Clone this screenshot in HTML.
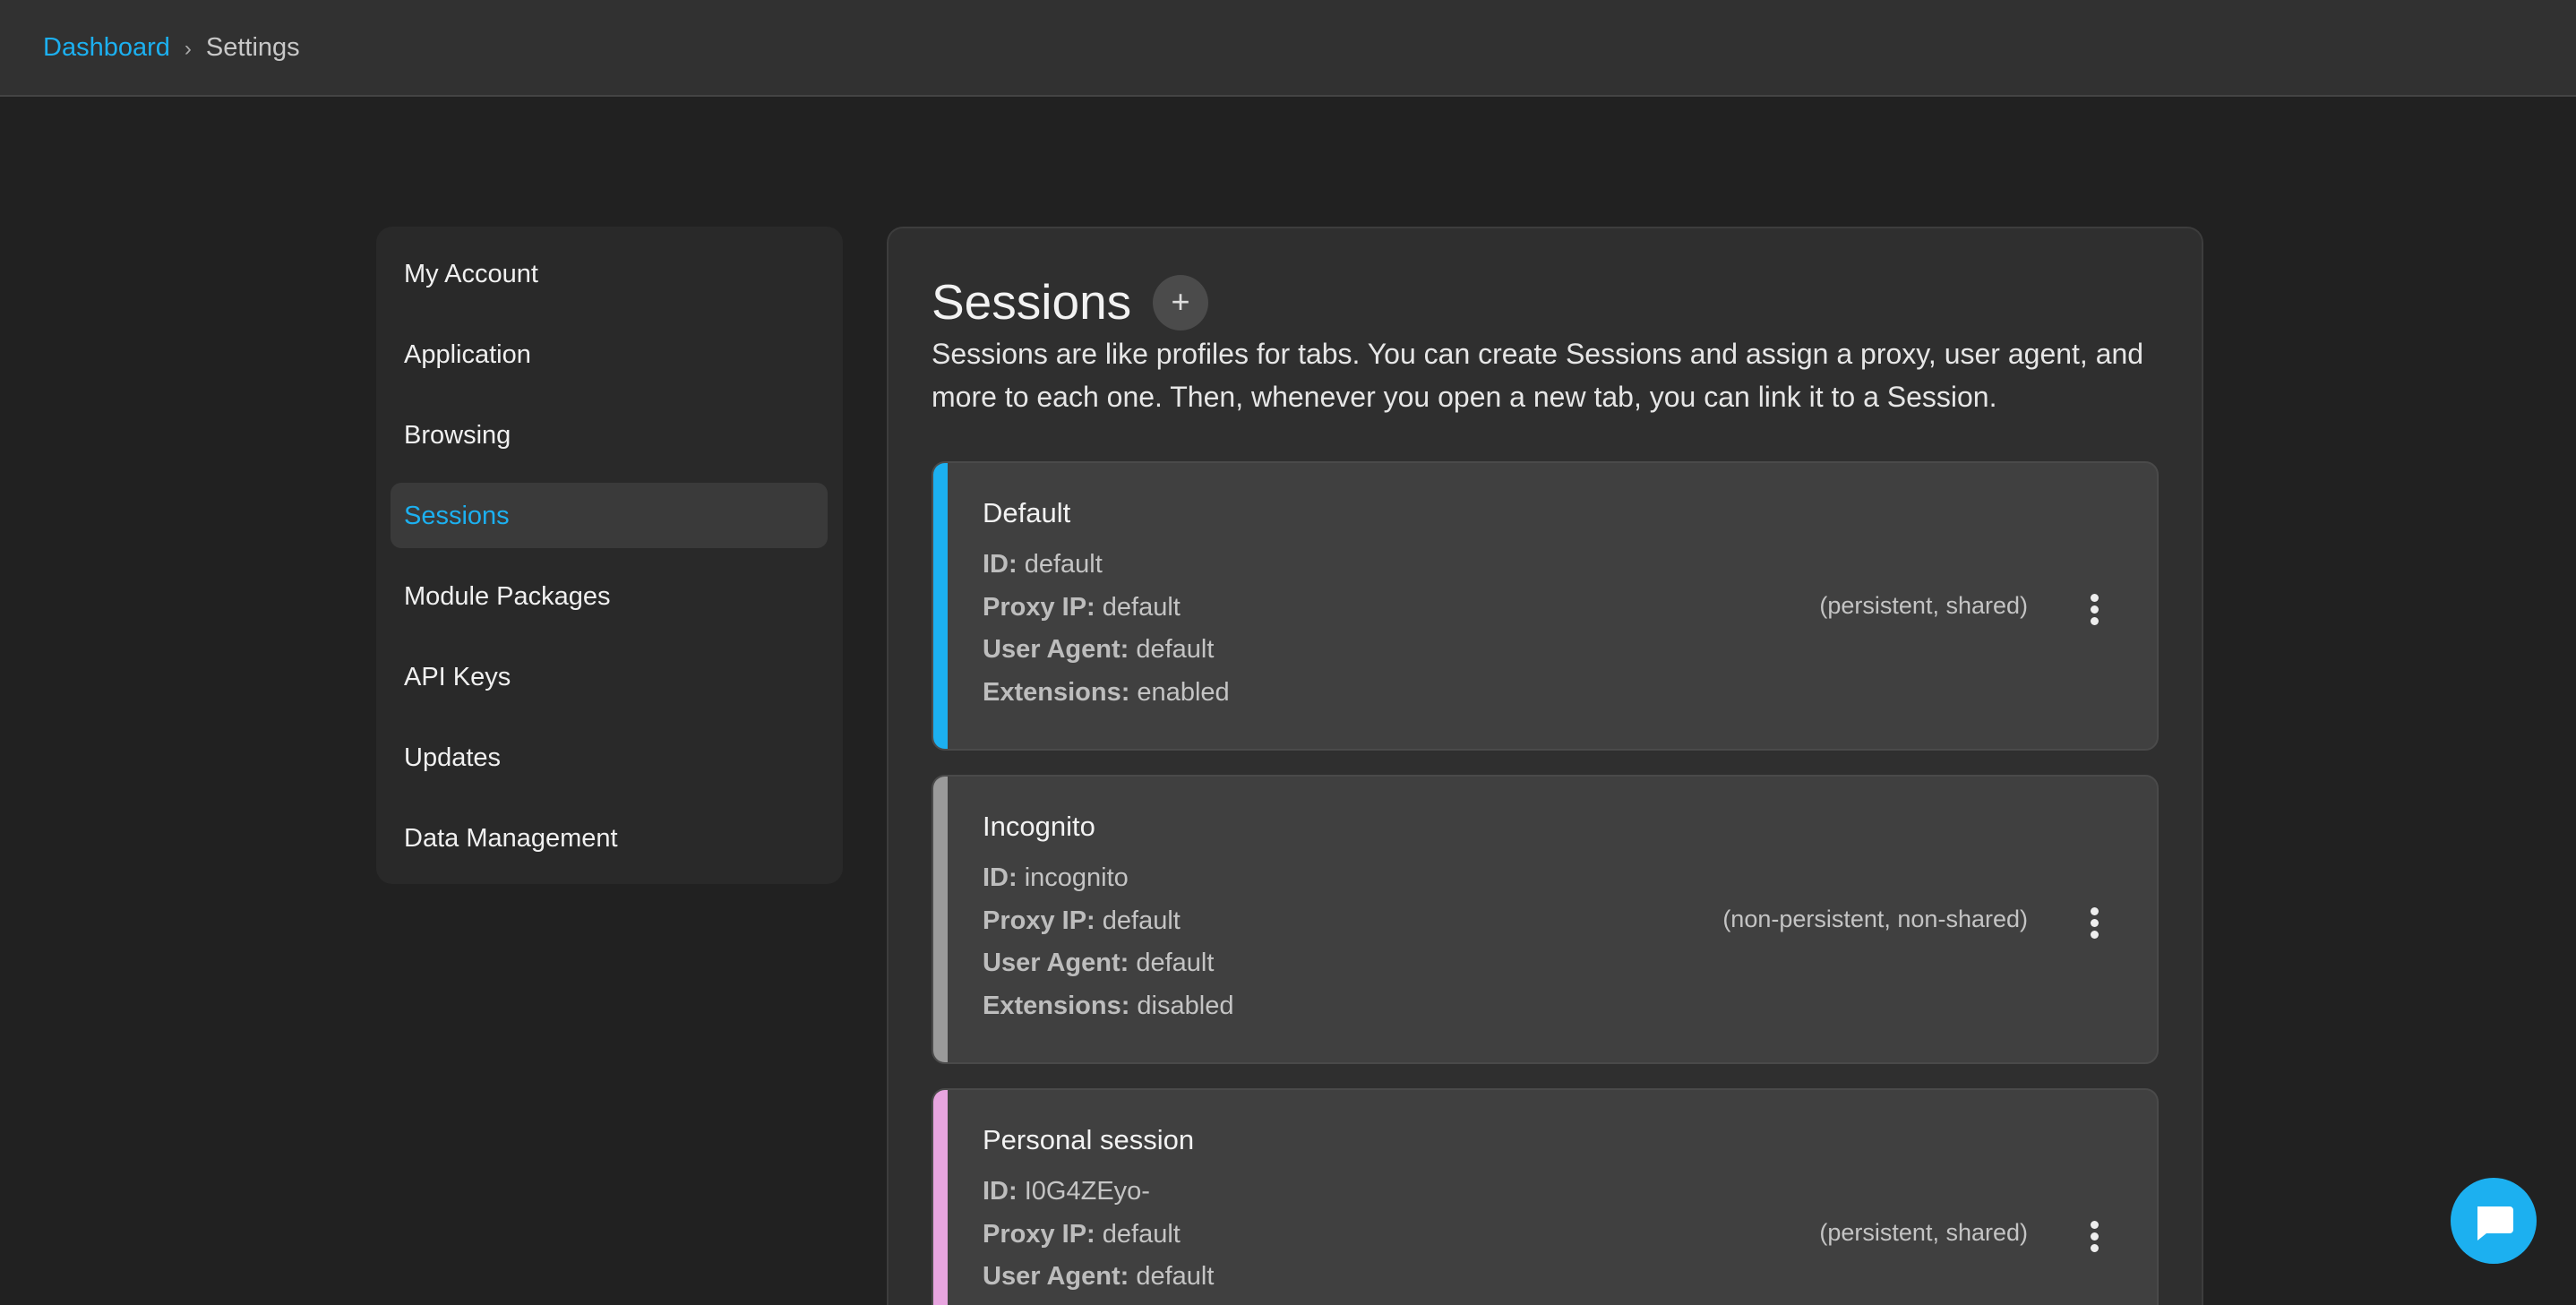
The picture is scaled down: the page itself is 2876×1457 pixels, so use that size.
<!DOCTYPE html>
<html><head><meta charset="utf-8"><style>
*{box-sizing:border-box;margin:0;padding:0}
html,body{width:2876px;height:1457px;overflow:hidden}
body{background:#212121;font-family:"Liberation Sans",sans-serif;color:#eee;position:relative}
.hdr{position:absolute;left:0;top:0;width:2876px;height:108px;background:#313131;border-bottom:2px solid #444}
.bc{position:absolute;left:48px;top:37px;font-size:29px;color:#c8c8c8}
.bc .d{color:#1cb0f0}
.bc .s{margin:0 16px;font-size:24px;color:#aaa}
.side{position:absolute;left:420px;top:253px;width:521px;height:734px;background:#292929;border-radius:18px}
.it{position:absolute;left:31px;font-size:29px;color:#f0f0f0;line-height:40px}
.act{position:absolute;left:16px;top:286px;width:488px;height:73px;background:#3a3a3a;border-radius:12px}
.main{position:absolute;left:990px;top:253px;width:1470px;height:1204px;background:#2f2f2f;border:2px solid #3d3d3d;border-bottom:none;border-radius:18px 18px 0 0;overflow:hidden}
h1{position:absolute;left:48px;top:50px;font-size:55px;font-weight:normal;color:#f2f2f2}
.plus{position:absolute;left:295px;top:52px;width:62px;height:62px;border-radius:50%;background:#4b4b4b;color:#ddd;font-size:36px;text-align:center;line-height:60px}
.desc{position:absolute;left:48px;top:116px;width:1420px;font-size:32px;line-height:48px;color:#e6e6e6}
.card{position:absolute;left:48px;width:1370px;height:323px;background:#404040;border:2px solid #4a4a4a;border-radius:15px;overflow:hidden}
.bar{position:absolute;left:0;top:0;bottom:0;width:16px}
.ct{position:absolute;left:55px;top:38px;font-size:31px;color:#f2f2f2}
.row{position:absolute;left:55px;font-size:29px;color:#c4c4c4}
.row b{color:#bdbdbd}
.tag{position:absolute;right:144px;top:144px;font-size:27px;color:#c4c4c4}
.dots{position:absolute;right:64px;top:146px;width:10px}
.dots i{display:block;width:9px;height:9px;border-radius:50%;background:#eee;margin-bottom:4px}
.chat{position:absolute;left:2736px;top:1315px;width:96px;height:96px;border-radius:50%;background:#1cb0f0}
</style></head><body>
<div class="hdr"><div class="bc"><span class="d">Dashboard</span><span class="s">›</span>Settings</div></div>
<div class="side">
<div class="act"></div>
<div class="it" style="top:33px">My Account</div>
<div class="it" style="top:123px">Application</div>
<div class="it" style="top:213px">Browsing</div>
<div class="it" style="top:303px;color:#1cb0f0">Sessions</div>
<div class="it" style="top:393px">Module Packages</div>
<div class="it" style="top:483px">API Keys</div>
<div class="it" style="top:573px">Updates</div>
<div class="it" style="top:663px">Data Management</div>
</div>
<div class="main">
<h1>Sessions</h1><div class="plus">+</div>
<div class="desc">Sessions are like profiles for tabs. You can create Sessions and assign a proxy, user agent, and more to each one. Then, whenever you open a new tab, you can link it to a Session.</div>

<div class="card" style="top:260px"><div class="bar" style="background:#1cb0f0"></div>
<div class="ct">Default</div>
<div class="row" style="top:97px"><b>ID:</b> default</div>
<div class="row" style="top:145px"><b>Proxy IP:</b> default</div>
<div class="row" style="top:192px"><b>User Agent:</b> default</div>
<div class="row" style="top:240px"><b>Extensions:</b> enabled</div>
<div class="tag">(persistent, shared)</div><div class="dots"><i></i><i></i><i></i></div></div>

<div class="card" style="top:610px"><div class="bar" style="background:#9a9a9a"></div>
<div class="ct">Incognito</div>
<div class="row" style="top:97px"><b>ID:</b> incognito</div>
<div class="row" style="top:145px"><b>Proxy IP:</b> default</div>
<div class="row" style="top:192px"><b>User Agent:</b> default</div>
<div class="row" style="top:240px"><b>Extensions:</b> disabled</div>
<div class="tag">(non-persistent, non-shared)</div><div class="dots"><i></i><i></i><i></i></div></div>

<div class="card" style="top:960px;height:244px;border-bottom:none;border-radius:15px 15px 0 0"><div class="bar" style="background:#e7a5df"></div>
<div class="ct">Personal session</div>
<div class="row" style="top:97px"><b>ID:</b> I0G4ZEyo-</div>
<div class="row" style="top:145px"><b>Proxy IP:</b> default</div>
<div class="row" style="top:192px"><b>User Agent:</b> default</div>
<div class="tag">(persistent, shared)</div><div class="dots"><i></i><i></i><i></i></div></div>
</div>
<div class="chat"><svg width="96" height="96" viewBox="0 0 96 96"><path d="M30 32h36a4 4 0 0 1 4 4v22a4 4 0 0 1-4 4H40l-10 8z" fill="#fff"/></svg></div>
</body></html>
